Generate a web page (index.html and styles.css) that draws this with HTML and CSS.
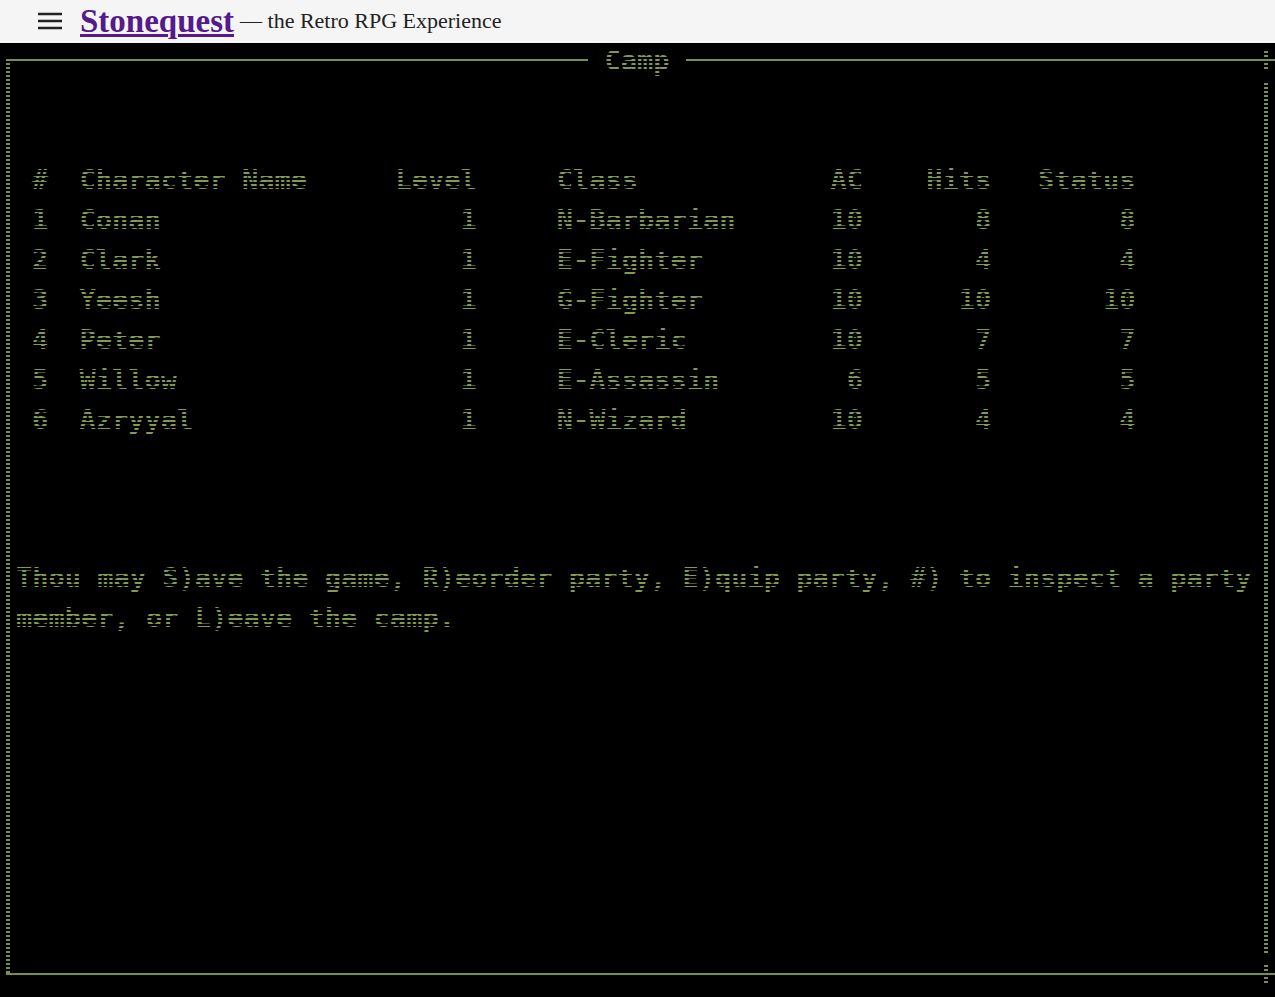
FILE: index.html
```html
<!DOCTYPE html>
<html lang="en">
<head>
<meta charset="utf-8">
<title>Stonequest</title>
<link rel="stylesheet" href="styles.css">
</head>
<body>
<header class="bar">
  <button class="menu" type="button" aria-label="Menu">
    <svg width="24" height="18" viewBox="0 0 24 18" aria-hidden="true"><path d="M0 2h24M0 9h24M0 16h24" stroke="#222" stroke-width="2.5"/></svg>
  </button>
  <a class="brand" href="#">Stonequest</a>
  <span class="tagline">— the Retro RPG Experience</span>
</header>
<main class="screen">
  <div class="top">
    <div class="rule rule-left"></div>
    <h1 class="title scan">Camp</h1>
    <div class="rule rule-right"></div>
    <i class="cross"></i>
  </div>
  <div class="middle">
    <div class="side"></div>
    <div class="content">
      <table class="party scan">
        <colgroup><col class="c-num"><col class="c-name"><col class="c-level"><col class="c-class"><col class="c-ac"><col class="c-hits"><col class="c-status"></colgroup>
        <thead>
          <tr><th>#</th><th>Character Name</th><th class="r">Level</th><th class="class">Class</th><th class="r">AC</th><th class="r">Hits</th><th class="r">Status</th></tr>
        </thead>
        <tbody>
          <tr><td>1</td><td>Conan</td><td class="r">1</td><td class="class">N-Barbarian</td><td class="r">10</td><td class="r">8</td><td class="r">8</td></tr>
          <tr><td>2</td><td>Clark</td><td class="r">1</td><td class="class">E-Fighter</td><td class="r">10</td><td class="r">4</td><td class="r">4</td></tr>
          <tr><td>3</td><td>Yeesh</td><td class="r">1</td><td class="class">G-Fighter</td><td class="r">10</td><td class="r">10</td><td class="r">10</td></tr>
          <tr><td>4</td><td>Peter</td><td class="r">1</td><td class="class">E-Cleric</td><td class="r">10</td><td class="r">7</td><td class="r">7</td></tr>
          <tr><td>5</td><td>Willow</td><td class="r">1</td><td class="class">E-Assassin</td><td class="r">6</td><td class="r">5</td><td class="r">5</td></tr>
          <tr><td>6</td><td>Azryyal</td><td class="r">1</td><td class="class">N-Wizard</td><td class="r">10</td><td class="r">4</td><td class="r">4</td></tr>
        </tbody>
      </table>
      <p class="message scan">Thou may S)ave the game, R)eorder party, E)quip party, #) to inspect a party member, or L)eave the camp.</p>
    </div>
    <div class="side side-right"></div>
  </div>
  <div class="bottom"><i class="cross"></i></div>
</main>
</body>
</html>
```
FILE: styles.css
```css
* { box-sizing: border-box; }
body {
  margin: 0;
  min-height: 100vh;
  display: flex;
  flex-direction: column;
  background: #000;
}
.bar {
  display: flex;
  align-items: center;
  height: 43px;
  flex: none;
  padding: 0 0 2px 38px;
  background: #f5f5f5;
  color: #222;
  font-family: "Liberation Serif", serif;
}
.menu {
  display: flex;
  padding: 0;
  margin-right: 18px;
  border: 0;
  background: none;
}
.brand {
  margin-right: 6px;
  font-size: 33px;
  line-height: 40px;
  font-weight: bold;
  color: #551a8b;
  text-decoration-thickness: 3px;
  text-underline-offset: 2px;
}
.tagline {
  font-size: 22px;
  line-height: 40px;
}
.screen {
  --ink: #79904a;
  --dots: repeating-linear-gradient(var(--ink) 0 2px, #000 2px 4px);
  flex: 1;
  display: flex;
  flex-direction: column;
  padding: 0 0 4px 6px;
  color: #829b50;
  font: bold 27px/40px "DejaVu Sans Mono", "Liberation Mono", monospace;
}
.scan { position: relative; }
.scan::after {
  content: "";
  position: absolute;
  inset: 0;
  background: repeating-linear-gradient(transparent 0 2px, #000 2px 4px);
  pointer-events: none;
}
.top {
  position: relative;
  display: flex;
  height: 40px;
}
.rule {
  margin-top: 16px;
  border-top: 2px solid var(--ink);
}
.rule-left {
  flex: 583;
  background: var(--dots) 0 2px / 4px 100% no-repeat;
}
.rule-right { flex: 590; }
.title {
  margin: 0 16px;
  font: inherit;
  line-height: 36px;
}
.cross {
  position: absolute;
  right: 7px;
  top: 8px;
  width: 4px;
  height: 18px;
  background: var(--dots);
}
.middle {
  flex: 1;
  display: flex;
}
.side {
  width: 4px;
  flex: none;
  background: var(--dots);
}
.side-right { margin: 0 7px 18px 0; }
.content {
  flex: 1;
  padding: 77px 0 40px;
}
.party {
  width: 88%;
  margin-left: 22px;
  table-layout: fixed;
  border-collapse: collapse;
}
.party th, .party td {
  height: 40px;
  padding: 0;
  font: inherit;
  text-align: left;
  white-space: nowrap;
}
.party .r { text-align: right; }
.party .class { padding-left: 80px; }
.c-num { width: 47px; }
.c-name { width: 28%; }
.c-level { width: 8%; }
.c-class { width: 28%; }
.c-ac { width: 7%; }
.c-hits { width: 127px; }
.c-status { width: 143px; }
.message {
  margin: 118px 0 0 6px;
}
.bottom {
  position: relative;
  height: 20px;
  border-top: 2px solid var(--ink);
}
.bottom .cross { top: -10px; }
```
